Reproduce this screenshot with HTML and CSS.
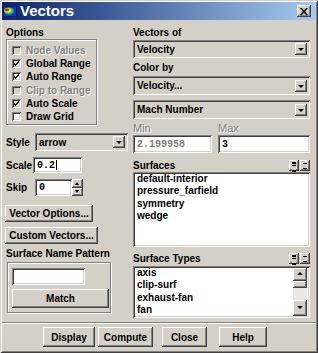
FILE: index.html
```html
<!DOCTYPE html>
<html lang="en">
  <head>
    <meta charset="utf-8">
    <link rel="stylesheet" href="styles.css">
    <title>Vectors</title>
  </head>
  <body>
    <div class="window">
      <div class="titlebar">
        <svg class="app-icon" width="14" height="11" viewBox="0 0 14 11">
          <rect x="0" y="0" width="14" height="11" fill="#1a1a6a"/>
          <rect x="1" y="1" width="12" height="9" fill="#2030d0"/>
          <ellipse cx="6" cy="5" rx="5" ry="3.5" fill="#20c040"/>
          <ellipse cx="5" cy="4.5" rx="3.5" ry="2.2" fill="#f0e020"/>
          <ellipse cx="4" cy="4" rx="2" ry="1.3" fill="#e02010"/>
        </svg>
        <span class="title">Vectors</span>
        <span class="close-btn">
          <svg width="8" height="7" viewBox="0 0 8 7"><path d="M0 0h2l2 2.5L6 0h2L5 3.5 8 7H6L4 4.5 2 7H0l3-3.5z" fill="#000"/></svg>
        </span>
      </div>

      <div class="main">
        <div class="col col-left">
          <div class="lbl">Options</div>
          <div class="group options">
            <div class="check off"><span class="box"></span>Node Values</div>
            <div class="check"><span class="box on"></span>Global Range</div>
            <div class="check"><span class="box on"></span>Auto Range</div>
            <div class="check off"><span class="box"></span>Clip to Range</div>
            <div class="check"><span class="box on"></span>Auto Scale</div>
            <div class="check"><span class="box"></span>Draw Grid</div>
          </div>

          <div class="row style-row">
            <span class="row-lbl">Style</span>
            <div class="select style-select"><span>arrow</span><span class="drop"></span></div>
          </div>
          <div class="row scale-row">
            <span class="row-lbl">Scale</span>
            <div class="field scale-field">0.2<span class="caret"></span></div>
          </div>
          <div class="row skip-row">
            <span class="row-lbl">Skip</span>
            <div class="field skip-field">0</div>
            <div class="spinner">
              <span class="spin up"></span>
              <span class="spin down"></span>
            </div>
          </div>

          <div class="btn vec-opts">Vector Options...</div>
          <div class="btn custom-vecs">Custom Vectors...</div>

          <div class="lbl pattern-lbl">Surface Name Pattern</div>
          <div class="group pattern">
            <div class="field pattern-field"></div>
            <div class="btn match">Match</div>
          </div>
        </div>

        <div class="col col-right">
          <div class="lbl">Vectors of</div>
          <div class="select sel-vectors"><span>Velocity</span><span class="drop"></span></div>
          <div class="lbl color-lbl">Color by</div>
          <div class="select sel-color"><span>Velocity...</span><span class="drop"></span></div>
          <div class="select sel-mach"><span>Mach Number</span><span class="drop"></span></div>

          <div class="minmax">
            <div class="mm min">
              <div class="lbl dis">Min</div>
              <div class="field mm-field dis-text">2.199958</div>
            </div>
            <div class="mm max">
              <div class="lbl dis">Max</div>
              <div class="field mm-field">3</div>
            </div>
          </div>

          <div class="list-head surf-head">
            <span>Surfaces</span>
            <span class="mini all"></span><span class="mini none"></span>
          </div>
          <div class="listbox surf-list">
            <div class="items">
              <div>default-interior</div>
              <div>pressure_farfield</div>
              <div>symmetry</div>
              <div>wedge</div>
            </div>
          </div>

          <div class="list-head types-head">
            <span>Surface Types</span>
            <span class="mini all"></span><span class="mini none"></span>
          </div>
          <div class="listbox types-list">
            <div class="items">
              <div>axis</div>
              <div>clip-surf</div>
              <div>exhaust-fan</div>
              <div>fan</div>
            </div>
            <div class="scrollbar">
              <span class="sb-btn sb-up"></span>
              <span class="sb-thumb"></span>
              <span class="sb-track"></span>
              <span class="sb-btn sb-down"></span>
            </div>
          </div>
        </div>
      </div>

      <div class="separator"></div>

      <div class="actions">
        <div class="btn act-display">Display</div>
        <div class="btn act-compute">Compute</div>
        <div class="btn act-close">Close</div>
        <div class="btn act-help">Help</div>
      </div>
    </div>
  </body>
</html>
```

FILE: styles.css
```css
* { box-sizing: border-box; }

body {
  margin: 0;
  background: #d4d0c8;
  color: #000;
  font: bold 10px "Liberation Sans", Arial, sans-serif;
}

.window {
  width: 318px;
  height: 353px;
  padding: 2px;
  display: flex;
  flex-direction: column;
  background: #d4d0c8;
  box-shadow: inset 1px 1px #d4d0c8, inset -1px -1px #404040,
              inset 2px 2px #fff, inset -2px -2px #808080;
}

/* title bar */
.titlebar {
  height: 18px;
  display: flex;
  align-items: center;
  padding: 0 5px 0 1px;
  color: #fff;
  background: linear-gradient(to right, #0a246a, #a6caf0);
}
.app-icon { margin-right: 3px; }
.title { flex: 1; font-size: 15px; line-height: 18px; }
.close-btn {
  width: 14px;
  height: 12px;
  display: flex;
  align-items: center;
  justify-content: center;
  background: #d4d0c8;
  box-shadow: inset -1px -1px #404040, inset 1px 1px #fff, inset -2px -2px #808080;
}

/* shared bevels */
.btn, .drop, .spin, .mini, .sb-btn, .sb-thumb {
  background: #d4d0c8;
  box-shadow: inset -1px -1px #404040, inset 1px 1px #fff, inset -2px -2px #808080;
}
.field, .select, .listbox, .box {
  box-shadow: inset 1px 1px #808080, inset -1px -1px #fff,
              inset 2px 2px #404040, inset -2px -2px #d4d0c8;
}

.main {
  display: grid;
  grid-template-columns: 122px 177px;
  column-gap: 5px;
  padding: 7px 0 0 4px;
  align-items: start;
}
.col { display: flex; flex-direction: column; }

.lbl { height: 12px; line-height: 12px; }
.dis { color: #808080; text-shadow: 1px 1px #fff; }
.dis-text { color: #808080; }

/* group boxes */
.group {
  border: 1px solid #808080;
  box-shadow: 1px 1px #fff, inset 1px 1px #fff;
}
.options {
  width: 91px;
  padding: 4px 0 1px 5px;
}
.check {
  height: 13.2px;
  display: flex;
  align-items: center;
  gap: 5px;
}
.check.off { color: #808080; text-shadow: 1px 1px #fff; }
.box {
  width: 9px;
  height: 9px;
  background: #fff;
  flex: none;
}
.check.off .box { background: #d4d0c8; }
.box.on {
  background: #fff url("data:image/svg+xml,%3Csvg xmlns='http://www.w3.org/2000/svg' width='9' height='9'%3E%3Cpath d='M2 3.5l1.5 1.5 3.5-3.5v2L3.5 7 2 5.5z' fill='%23000'/%3E%3C/svg%3E") no-repeat;
}

/* left rows */
.row { display: flex; align-items: center; }
.row-lbl { width: 29px; }
.style-row { margin-top: 8px; height: 18px; }
.scale-row { margin-top: 6px; height: 16px; }
.skip-row { margin-top: 6px; height: 17px; }

.select {
  display: flex;
  align-items: center;
  background: #d4d0c8;
  padding: 0 3px 0 4px;
}
.select span:first-child { flex: 1; }
.drop {
  width: 12px;
  height: 12px;
  position: relative;
}
.drop::after {
  content: "";
  position: absolute;
  left: 3px;
  top: 5px;
  border-left: 3px solid transparent;
  border-right: 3px solid transparent;
  border-top: 3px solid #000;
}
.style-select { width: 93px; height: 18px; }

.field {
  background: #fff;
  font: bold 10px "Liberation Mono", "Courier New", monospace;
  display: flex;
  align-items: center;
  padding-left: 4px;
}
.scale-field { width: 49px; height: 16px; margin-left: -2px; }
.caret { width: 1px; height: 10px; background: #000; margin-left: 1px; }
.skip-field { width: 37px; height: 17px; }
.spinner { display: flex; flex-direction: column; width: 11px; height: 17px; }
.spin { flex: 1; position: relative; }
.spin::after {
  content: "";
  position: absolute;
  left: 3px;
  top: 3px;
  border-left: 2.5px solid transparent;
  border-right: 2.5px solid transparent;
}
.spin.up::after { border-bottom: 3px solid #000; }
.spin.down::after { border-top: 3px solid #000; top: 2px; }

.btn {
  display: flex;
  align-items: center;
  justify-content: center;
}
.vec-opts { width: 88px; height: 17px; margin: 9px 0 0 -1px; }
.custom-vecs { width: 93px; height: 17px; margin: 5px 0 0 -1px; }

.pattern-lbl { margin-top: 4px; }
.pattern {
  width: 104px;
  margin: 2px 0 0 1px;
  padding: 5px 1px 4px 4px;
}
.pattern-field { width: 73px; height: 17px; }
.match { width: 97px; height: 19px; margin-top: 4px; }

/* right column */
.sel-vectors { height: 18px; margin-top: 1px; }
.color-lbl { margin-top: 4px; }
.sel-color { height: 19px; margin-top: 2px; }
.sel-mach { height: 19px; margin-top: 5px; }

.minmax { display: flex; gap: 6px; margin-top: 3px; }
.mm .lbl { font-weight: normal; font-size: 11px; margin-bottom: 1px; }
.min { width: 79px; }
.max { flex: 1; }
.mm-field { height: 18px; }

.list-head {
  display: flex;
  align-items: center;
  height: 12px;
}
.list-head span:first-child { flex: 1; }
.surf-head { margin-top: 6px; }
.types-head { margin-top: 5px; margin-bottom: 2px; }
.mini { width: 10px; height: 11px; margin-left: 1px; position: relative; }
.mini::after {
  content: "";
  position: absolute;
  left: 3px;
  top: 2px;
  width: 4px;
}
.mini.all::after { height: 6px; border-top: 2px solid #000; border-bottom: 2px solid #000; background: linear-gradient(#d4d0c8 1px, #000 1px, #000 2px, #d4d0c8 2px); }
.mini.none::after { top: 3px; height: 4px; border-top: 1px solid #000; border-bottom: 1px solid #000; }

.listbox {
  background: #fff;
  display: flex;
  padding: 1px 2px 2px 4px;
}
.items { flex: 1; line-height: 12.3px; }
.surf-list { height: 75px; margin-top: 1px; }
.types-list { height: 52px; }

.scrollbar {
  width: 14px;
  display: flex;
  flex-direction: column;
  margin: 1px 1px 0 0;
  background: #ece9e4;
}
.sb-btn { position: relative; }
.sb-up { height: 13px; }
.sb-thumb { height: 7px; }
.sb-track { flex: 1; }
.sb-down { height: 16px; }
.sb-btn::after {
  content: "";
  position: absolute;
  left: 4px;
  border-left: 3px solid transparent;
  border-right: 3px solid transparent;
}
.sb-up::after { top: 4px; border-bottom: 3px solid #000; }
.sb-down::after { top: 6px; border-top: 3px solid #000; }

/* bottom */
.separator {
  margin-top: auto;
  height: 2px;
  border-top: 1px solid #808080;
  border-bottom: 1px solid #fff;
}
.actions {
  display: flex;
  height: 20px;
  margin: 3px 0 4px;
  padding-left: 41px;
}
.act-display { width: 52px; }
.act-compute { width: 55px; margin-left: 3px; }
.act-close { width: 45px; margin-left: 9px; }
.act-help { width: 48px; margin-left: 12px; }
```
